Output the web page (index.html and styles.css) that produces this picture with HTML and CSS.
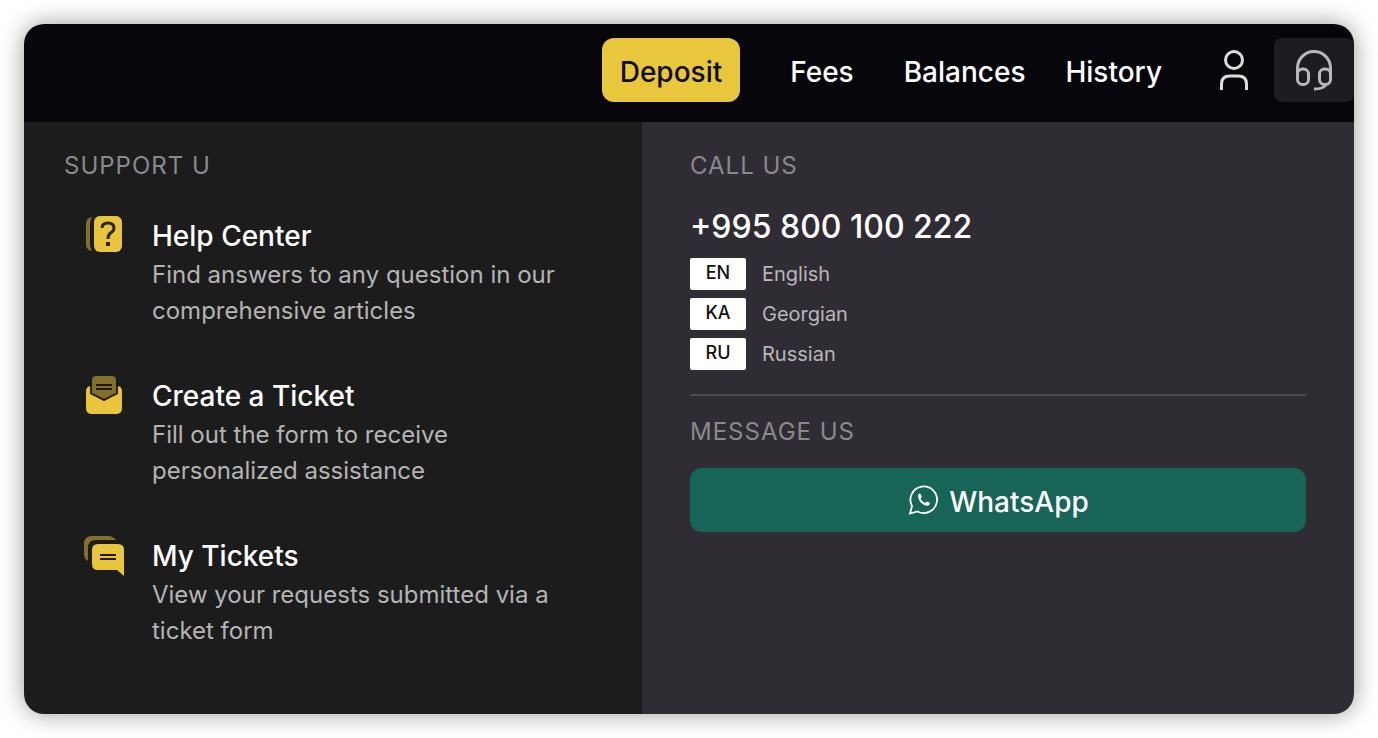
FILE: index.html
```
<!DOCTYPE html>
<html lang="en">
<head>
    <meta charset="UTF-8">
    <meta name="viewport" content="width=device-width, initial-scale=1.0">
    <title>Support</title>
    <link rel="stylesheet" href="styles.css">
</head>
<body>
    <div class="card">
        <header class="navbar">
            <nav class="nav-links">
                <button class="btn-deposit" type="button">Deposit</button>
                <a class="nav-fees" href="#">Fees</a>
                <a class="nav-balances" href="#">Balances</a>
                <a href="#">History</a>
            </nav>
            <button class="icon-btn" type="button" aria-label="Profile">
                <svg width="40" height="44" viewBox="0 0 40 44" fill="none" stroke="#dcdcdc" stroke-width="3">
                    <circle cx="20" cy="12" r="8.5"/>
                    <path d="M7.500 42v-6q0-8 8-8h9q8 0 8 8v6"/>
                </svg>
            </button>
            <button class="icon-btn active" type="button" aria-label="Support">
                <svg width="40" height="44" viewBox="0 0 40 44" fill="none" stroke="#b8b7ba" stroke-width="3">
                    <path d="M3.500 27V20a16.500 16.500 0 0 1 33 0v7"/>
                    <rect x="3.500" y="21" width="11" height="15.500" rx="5"/>
                    <rect x="25.500" y="21" width="11" height="15.500" rx="5"/>
                    <path d="M32 36.500q-2 4.500-12 4.500"/>
                </svg>
            </button>
        </header>
        <main class="panels">
            <section class="support">
                <h2>SUPPORT U</h2>
                <ul class="support-list">
                    <li>
                        <a href="#">
                            <svg class="item-icon" width="40" height="40" viewBox="0 0 40 40">
                                <path d="M8 3Q2 4 2 10v20q0 6 6 7Q6 34 6 30V10q0-4 2-7z" fill="#83702d"/>
                                <rect x="10" y="2" width="28" height="36" rx="6" fill="#e8c53c"/>
                                <path d="M18 14q0-5 6-5t6 5q0 3-3.500 5Q24 21 24 25" fill="none" stroke="#2b2718" stroke-width="3"/>
                                <path d="M22 28h4v4h-4z" fill="#2b2718"/>
                            </svg>
                            <span class="item-text">
                                <strong>Help Center</strong>
                                <span>Find answers to any question in our comprehensive articles</span>
                            </span>
                        </a>
                    </li>
                    <li>
                        <a href="#">
                            <svg class="item-icon" width="40" height="40" viewBox="0 0 40 40">
                                <path d="M8 19V6q0-4 4-4h16q4 0 4 4v13l-12 7z" fill="#83702d"/>
                                <path d="M12 11h16M12 15h16" stroke="#1c1c1d" stroke-width="2"/>
                                <path d="M2 17q0-4 4-5v7l14 8 14-8v-7q4 1 4 5v17q0 6-6 6H8q-6 0-6-6z" fill="#e8c53c"/>
                                <path d="M7 12v7.500l13 6.500 13-6.500V12" fill="none" stroke="#2b2718" stroke-width="2"/>
                            </svg>
                            <span class="item-text">
                                <strong>Create a Ticket</strong>
                                <span>Fill out the form to receive personalized assistance</span>
                            </span>
                        </a>
                    </li>
                    <li>
                        <a href="#">
                            <svg class="item-icon" width="40" height="40" viewBox="0 0 40 40">
                                <path d="M4 27Q0 25 0 20V10Q0 2 8 2h16q5 0 8 4H12q-8 0-8 8z" fill="#83702d"/>
                                <path d="M14 10h20q6 0 6 6v26l-7-6H14q-6 0-6-6V16q0-6 6-6z" fill="#e8c53c"/>
                                <path d="M16 21h16M16 25h16" stroke="#1c1c1d" stroke-width="2"/>
                            </svg>
                            <span class="item-text">
                                <strong>My Tickets</strong>
                                <span>View your requests submitted via a ticket form</span>
                            </span>
                        </a>
                    </li>
                </ul>
            </section>
            <section class="contact">
                <h2>CALL US</h2>
                <a class="phone" href="tel:+995800100222">+995 800 100 222</a>
                <ul class="languages">
                    <li><span class="badge">EN</span>English</li>
                    <li><span class="badge">KA</span>Georgian</li>
                    <li><span class="badge">RU</span>Russian</li>
                </ul>
                <hr>
                <h2>MESSAGE US</h2>
                <button class="btn-whatsapp" type="button">
                    <svg width="32" height="32" viewBox="0 0 32 32">
                        <path d="M3 29.500l2-7.500A13.300 13.300 0 1 1 10.500 27.500z" fill="none" stroke="#fff" stroke-width="1.800"/>
                        <path d="M11.500 10q1.300-1 2.300.3l.9 2.400q0 .9-1.200 1.800 1.300 3 4.500 4.500l1.800-1.600 3 1.300q.5 2.600-2.600 3Q16.500 21.500 13.300 18 10.200 14 11.500 10z" fill="#fff"/>
                    </svg>
                    <span>WhatsApp</span>
                </button>
            </section>
        </main>
    </div>
</body>
</html>
```
FILE: styles.css
```
* {
    box-sizing: border-box;
}
body {
    margin: 0;
    padding: 24px;
    background: white;
    font-family: Inter, "Liberation Sans", sans-serif;
}
h2 {
    margin: 0;
    font-size: 24px;
    line-height: 36px;
    font-weight: 400;
    letter-spacing: 1px;
    color: #8a898c;
}
ul {
    list-style: none;
    margin: 0;
    padding: 0;
}
a {
    color: inherit;
    text-decoration: none;
}
button {
    border: none;
    padding: 0;
    font-family: inherit;
    cursor: pointer;
}
.card {
    border-radius: 20px;
    overflow: hidden;
    box-shadow: 0 0 24px rgba(0,0,0,.4);
}
.navbar {
    display: flex;
    align-items: center;
    justify-content: flex-end;
    height: 98px;
    padding-bottom: 6px;
    background: #07060b;
}
.nav-links {
    display: flex;
    align-items: center;
    margin-right: 32px;
    font-size: 28px;
    font-weight: 500;
    color: white;
}
.nav-links a {
    padding-top: 4px;
}
.btn-deposit {
    height: 64px;
    padding: 4px 18px 0;
    margin-right: 50px;
    border-radius: 12px;
    background: #e8c73c;
    color: #0d0c08;
    font-size: 28px;
    font-weight: 500;
}
.nav-fees {
    margin-right: 50px;
}
.nav-balances {
    margin-right: 40px;
}
.icon-btn {
    display: flex;
    align-items: center;
    justify-content: center;
    width: 80px;
    height: 64px;
    border-radius: 8px;
    background: none;
}
.icon-btn.active {
    background: #1e1b21;
}
.panels {
    display: grid;
    grid-template-columns: 309fr 356fr;
}
.support {
    padding: 26px 80px 65px 40px;
    background: #1c1c1d;
}
.support-list {
    display: flex;
    flex-direction: column;
    gap: 45px;
    margin-top: 30px;
}
.support-list a {
    display: flex;
    gap: 28px;
    padding-left: 20px;
}
.item-icon {
    flex-shrink: 0;
    overflow: visible;
}
.item-text {
    display: flex;
    flex-direction: column;
    padding-top: 1px;
    font-size: 24px;
    line-height: 36px;
    color: #b4b4b4;
}
.item-text strong {
    font-size: 28px;
    line-height: 42px;
    font-weight: 500;
    color: white;
}
.contact {
    padding: 26px 48px;
    background: #302c33;
}
.phone {
    display: block;
    margin-top: 23px;
    font-size: 32px;
    line-height: 40px;
    font-weight: 500;
    color: white;
}
.languages {
    display: flex;
    flex-direction: column;
    gap: 8px;
    margin-top: 11px;
}
.languages li {
    display: flex;
    align-items: center;
    gap: 16px;
    font-size: 20px;
    line-height: 32px;
    color: #b8b7b9;
}
.badge {
    width: 56px;
    height: 32px;
    border-radius: 2px;
    background: white;
    color: #111;
    font-size: 18px;
    line-height: 30px;
    font-weight: 500;
    text-align: center;
}
hr {
    height: 2px;
    margin: 24px 0 18px;
    border: none;
    background: #4c494f;
}
.btn-whatsapp {
    display: flex;
    align-items: center;
    justify-content: center;
    gap: 10px;
    width: 100%;
    height: 64px;
    margin-top: 18px;
    border-radius: 12px;
    background: #176557;
    color: white;
    font-size: 28px;
    font-weight: 500;
}
.btn-whatsapp span {
    padding-top: 3px;
}
```
